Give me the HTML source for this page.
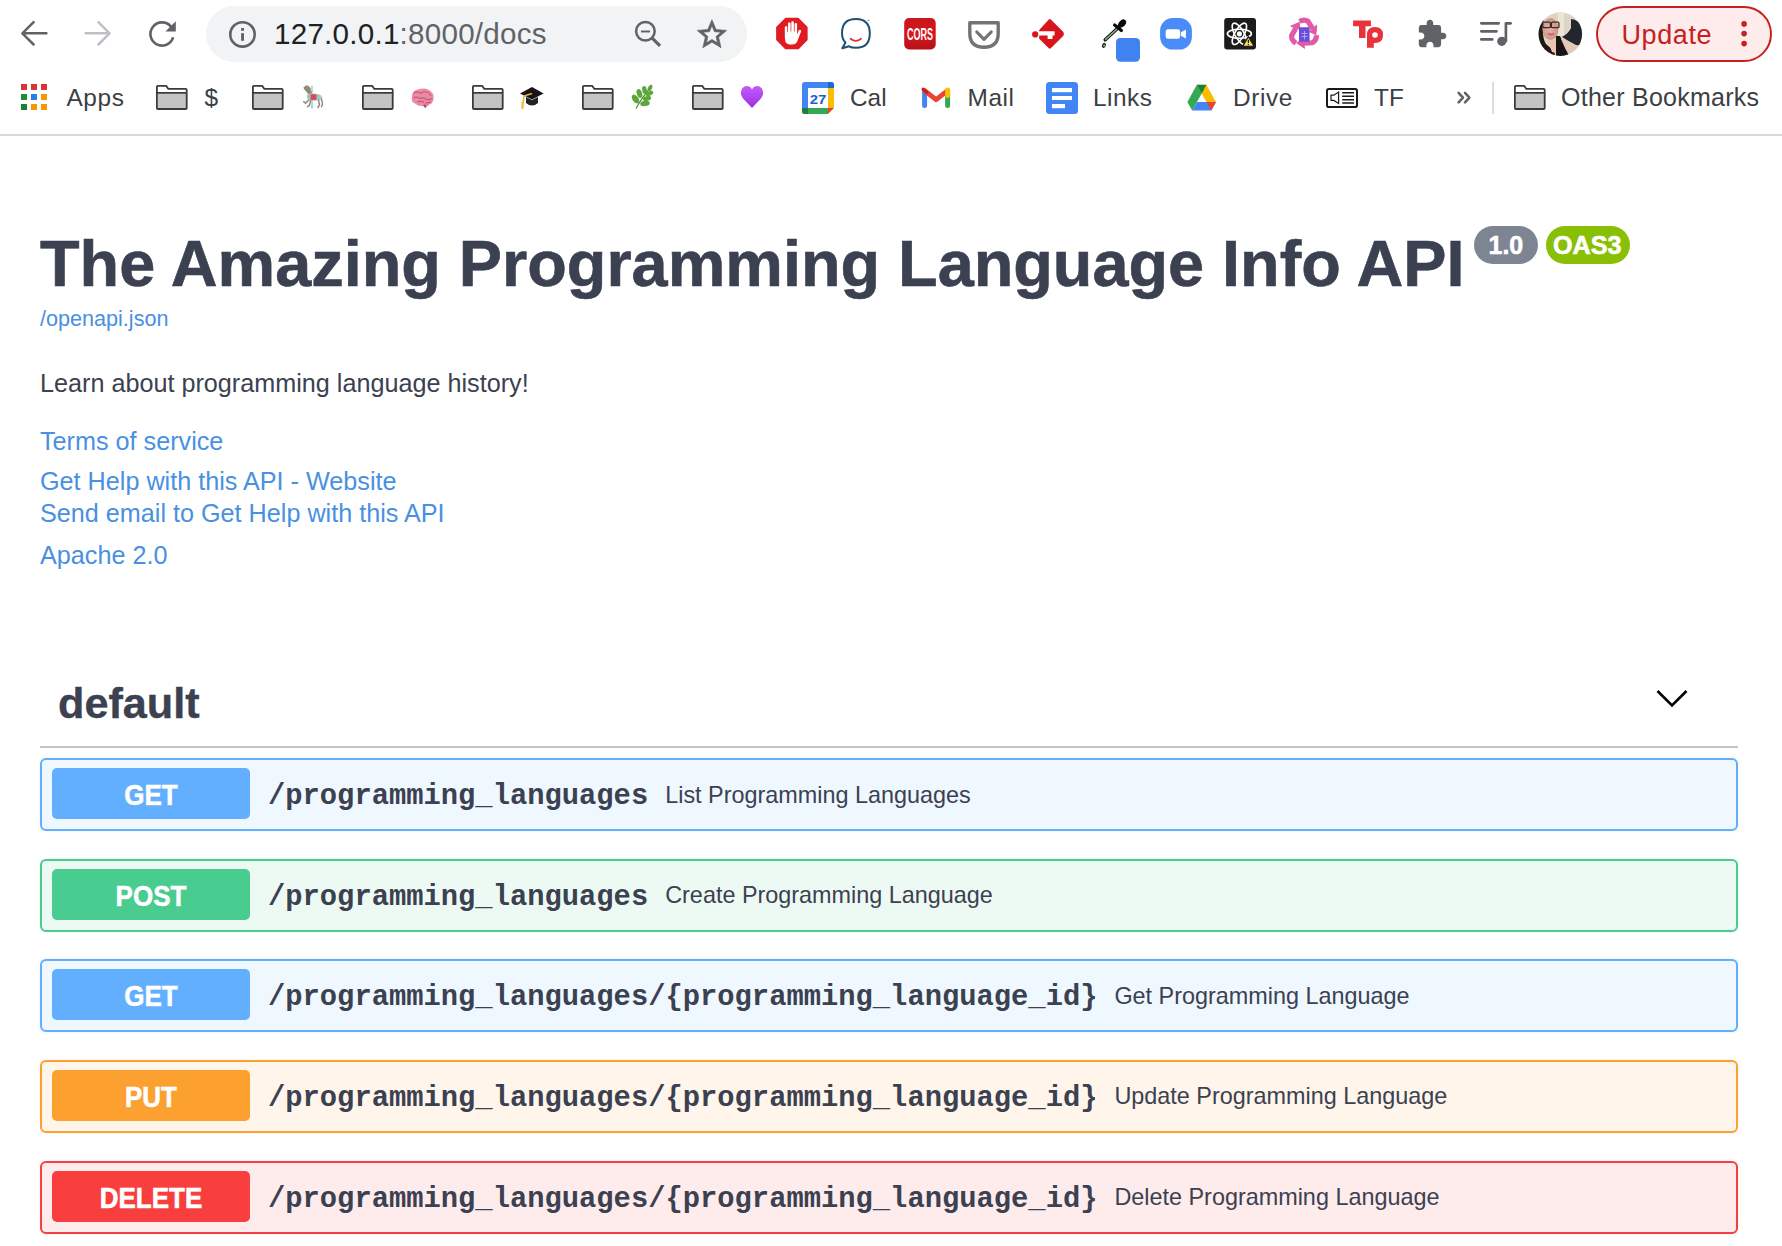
<!DOCTYPE html>
<html><head><meta charset="utf-8">
<style>
html,body{margin:0;padding:0;background:#fff;width:1782px;height:1246px;overflow:hidden;position:relative;font-family:'Liberation Sans', sans-serif;}
.t{position:absolute;white-space:nowrap;line-height:normal;}
.abs{position:absolute;}
svg{position:absolute;overflow:visible;}
</style></head><body>

<div class="abs" style="left:206px;top:6px;width:541px;height:56px;border-radius:28px;background:#f1f3f4;"></div>
<div class="abs" style="left:0;top:134px;width:1782px;height:2px;background:#d9d9d9;"></div>
<div class="abs" style="left:1596px;top:6px;width:172px;height:51.5px;border:2px solid #c5221f;border-radius:28px;background:#fdeceb;"></div>
<svg style="left:0;top:0" width="1782" height="136" viewBox="0 0 1782 136">
<path d="M46.4 33.3 H22.6 M33.6 22.2 L22.4 33.3 L33.6 44.5" fill="none" stroke="#5f6368" stroke-width="2.5" stroke-linecap="round" stroke-linejoin="round"/>
<path d="M85.6 33.3 H109.4 M98.4 22.2 L109.6 33.3 L98.4 44.5" fill="none" stroke="#bdc1c6" stroke-width="2.5" stroke-linecap="round" stroke-linejoin="round"/>
<path d="M170.6 26.2 A11.6 11.6 0 1 0 172.8 38.3" fill="none" stroke="#5f6368" stroke-width="2.6" stroke-linecap="round"/>
<path d="M175.8 21.2 V31.6 H165.4 Z" fill="#5f6368"/>
<circle cx="242.5" cy="34.4" r="12.2" fill="none" stroke="#5f6368" stroke-width="2.6"/>
<rect x="241.1" y="28" width="2.9" height="2.8" fill="#5f6368"/><rect x="241.1" y="33.2" width="2.9" height="7.6" fill="#5f6368"/>
<circle cx="645.4" cy="31.3" r="9.3" fill="none" stroke="#5f6368" stroke-width="2.5"/>
<path d="M641 31.5 H650" stroke="#5f6368" stroke-width="1.9"/>
<path d="M652.2 38.2 L660 45.8" stroke="#5f6368" stroke-width="3.2" stroke-linecap="butt"/>
<path transform="translate(694.3,16.8) scale(1.47)" fill="#5f6368" stroke="#5f6368" stroke-width="0.45" stroke-linejoin="round" d="M22 9.24l-7.19-.62L12 2 9.19 8.63 2 9.24l5.46 4.73L5.82 21 12 17.27 18.18 21l-1.63-7.03L22 9.24zM12 15.4l-3.76 2.27 1-4.28-3.32-2.88 4.38-.38L12 6.1l1.71 4.04 4.38.38-3.32 2.88 1 4.28L12 15.4z"/>
<polygon points="806.9,39.8 798.1,48.6 785.7,48.6 776.9,39.8 776.9,27.4 785.7,18.6 798.1,18.6 806.9,27.4" fill="#e01b22" stroke="#e01b22" stroke-width="1.5" stroke-linejoin="round"/>
<path fill="#fff" d="M785.5 42 Q784.6 38 784.8 33 V27.5 Q784.8 26 786.1 26 Q787.3 26 787.3 27.5 V32 H788 V23.8 Q788 22.3 789.3 22.3 Q790.6 22.3 790.6 23.8 V31.5 H791.3 V22.6 Q791.3 21.2 792.6 21.2 Q793.9 21.2 793.9 22.6 V31.5 H794.6 V24.5 Q794.6 23.1 795.9 23.1 Q797.1 23.1 797.1 24.5 V34.5 L798.5 31 Q799.3 29.4 800.5 30 Q801.5 30.6 800.9 32 L797.6 40.5 Q796.5 44.5 792 44.6 Q787 44.6 785.5 42 Z"/>
<path d="M845.5 42.6 Q842 39 842 33 Q842 19 856 19 Q869.8 19 869.8 33.5 Q869.8 47.8 856 47.8 Q851.5 47.8 849 46.3 L842.3 48.2 L845.5 42.6 Z" fill="none" stroke="#1f4f72" stroke-width="2" stroke-linejoin="round"/>
<path d="M850.6 38.8 Q855.8 43 861 38.8" fill="none" stroke="#e0323c" stroke-width="1.8" stroke-linecap="round"/>
<path d="M867.5 20.3 H869.5" stroke="#555" stroke-width="0.8"/>
<defs><linearGradient id="corsg" x1="0" y1="0" x2="0" y2="1"><stop offset="0" stop-color="#c8161d"/><stop offset="0.5" stop-color="#d9141b"/><stop offset="1" stop-color="#b5121a"/></linearGradient></defs>
<rect x="904.2" y="18.1" width="31.5" height="31.3" rx="5" fill="url(#corsg)"/>
<text x="920" y="39.8" text-anchor="middle" font-family="Liberation Sans" font-weight="700" font-size="16.5" fill="#fff" textLength="26" lengthAdjust="spacingAndGlyphs">CORS</text>
<path d="M969.8 22.8 H998.2 V33.5 Q998.2 47.2 984 47.2 Q969.8 47.2 969.8 33.5 Z" fill="none" stroke="#737373" stroke-width="3.4" stroke-linejoin="round"/>
<path d="M976.8 32 L984 39.4 L991.2 32" fill="none" stroke="#737373" stroke-width="3.2" stroke-linecap="round" stroke-linejoin="round"/>
<path fill="#d8141c" d="M1048.8 19.4 Q1049.8 18.6 1050.8 19.4 L1063.4 32 Q1064.4 33.9 1063.4 35.8 L1050.8 48.3 Q1049.8 49.1 1048.8 48.3 L1039.2 38.7 L1039.2 30 Z"/>
<path fill="#fff" d="M1038.5 31.3 H1054.6 V35.6 H1052.5 V39 H1047.6 V35.6 H1038.5 Z"/>
<circle cx="1035.2" cy="34.4" r="3.1" fill="#d8141c"/>
<path d="M1105.2 39.8 L1117.4 28.6" stroke="#111" stroke-width="3.4" stroke-linecap="round"/>
<path d="M1105.6 39.4 L1117 29" stroke="#7fb58a" stroke-width="1.5" stroke-linecap="round"/>
<path d="M1114.6 25 L1121.4 30.6" stroke="#0a0a0a" stroke-width="3.2" stroke-linecap="round"/>
<ellipse cx="1122.2" cy="23.4" rx="4.4" ry="3.2" transform="rotate(-45 1122.2 23.4)" fill="#0a0a0a"/>
<path d="M1118.6 27 L1121 24.4" stroke="#0a0a0a" stroke-width="4"/>
<ellipse cx="1103.9" cy="45.4" rx="1.9" ry="2.6" transform="rotate(25 1103.9 45.4)" fill="#1d2a1d"/>
<ellipse cx="1104.1" cy="45.6" rx="0.8" ry="1.3" fill="#7fb58a"/>
<rect x="1116" y="38" width="24" height="23.8" rx="4.2" fill="#3f82f0"/>
<rect x="1160.1" y="18.1" width="31.8" height="31.5" rx="12.5" fill="#4a8cf7"/>
<rect x="1165.7" y="29.2" width="14.4" height="9.6" rx="2.2" fill="#fff"/>
<path d="M1180.8 32.6 L1185.9 29.4 V38.6 L1180.8 35.6 Z" fill="#fff"/>
<rect x="1224.2" y="17.9" width="31.8" height="31.7" rx="3" fill="#1c1c1c"/>
<g fill="none" stroke="#fff" stroke-width="1.6"><ellipse cx="1239.4" cy="33.8" rx="12" ry="4.6" transform="rotate(-60 1239.4 33.8)"/><ellipse cx="1239.4" cy="33.8" rx="12" ry="4.6" transform="rotate(60 1239.4 33.8)"/><ellipse cx="1239.4" cy="33.8" rx="12" ry="4.6" transform="rotate(0 1239.4 33.8)"/></g>
<circle cx="1239.4" cy="33.8" r="2.6" fill="#fff"/>
<path d="M1248.4 36.6 L1254.2 46.4 H1242.6 Z" fill="#f2e35a" stroke="#1c1c1c" stroke-width="1.2" stroke-linejoin="round"/>
<path d="M1248.4 39.8 V43" stroke="#1c1c1c" stroke-width="1.3"/><circle cx="1248.4" cy="44.6" r="0.7" fill="#1c1c1c"/>
<g transform="translate(1304,33.3)" fill="none" stroke="#e05aa8" stroke-width="5.2" stroke-linejoin="round">
<path transform="rotate(0)" d="M-4.5 -11.8 Q0 -14.5 4 -12 L8.6 -4.6"/>
<path transform="rotate(0)" d="M5.8 -1.6 L12.6 -7.8 L11.8 1.2 Z" fill="#e05aa8" stroke-width="1.2"/>
<path transform="rotate(120)" d="M-4.5 -11.8 Q0 -14.5 4 -12 L8.6 -4.6"/>
<path transform="rotate(120)" d="M5.8 -1.6 L12.6 -7.8 L11.8 1.2 Z" fill="#e05aa8" stroke-width="1.2"/>
<path transform="rotate(240)" d="M-4.5 -11.8 Q0 -14.5 4 -12 L8.6 -4.6"/>
<path transform="rotate(240)" d="M5.8 -1.6 L12.6 -7.8 L11.8 1.2 Z" fill="#e05aa8" stroke-width="1.2"/>
</g>
<rect x="1299" y="27.2" width="10.6" height="14.6" rx="1" fill="#6a4ed8"/>
<path d="M1301.5 33.5 H1307.5 M1301.5 36.5 H1307.5 M1304.5 31 V39.5" stroke="#b9a8f0" stroke-width="0.9"/>
<path fill="#e8323c" d="M1353.1 20.4 H1370.9 V26.2 H1365.5 V37.9 H1359 V26.2 H1353.1 Z"/>
<path fill="#e8323c" d="M1367 35 Q1367 27 1375 27 Q1383 27 1383 35 Q1383 43 1375 43 Q1374.5 43 1373.8 42.8 V47.7 H1367 Z"/>
<circle cx="1375" cy="35" r="2.8" fill="#fff"/>
<path transform="translate(1416.2,18.4) scale(1.31)" fill="#5f6368" d="M20.5 11H19V7c0-1.1-.9-2-2-2h-4V3.5C13 2.12 11.88 1 10.5 1S8 2.12 8 3.5V5H4c-1.1 0-1.99.9-1.99 2v3.8H3.5c1.49 0 2.7 1.21 2.7 2.7s-1.21 2.7-2.7 2.7H2V20c0 1.1.9 2 2 2h3.8v-1.5c0-1.49 1.21-2.7 2.7-2.7 1.49 0 2.7 1.21 2.7 2.7V22H17c1.1 0 2-.9 2-2v-4h1.5c1.38 0 2.5-1.12 2.5-2.5S21.88 11 20.5 11z"/>
<path d="M1481.3 23.3 H1498.7 M1481.3 31.3 H1496.5 M1481.3 39.4 H1492.3" stroke="#5f6368" stroke-width="2.7" stroke-linecap="round"/>
<path d="M1505.9 41 V23.3 H1510.7" fill="none" stroke="#5f6368" stroke-width="2.7" stroke-linecap="round" stroke-linejoin="round"/>
<circle cx="1501.8" cy="41.3" r="4.6" fill="#5f6368"/>
<defs><clipPath id="av"><circle cx="26.3" cy="26.1" r="21.8"/></clipPath><radialGradient id="face" cx="0.45" cy="0.5" r="0.6"><stop offset="0" stop-color="#e8b4a8"/><stop offset="1" stop-color="#c98f80"/></radialGradient></defs>
<g transform="translate(1534,8)"><g clip-path="url(#av)"><rect x="0" y="0" width="52" height="52" fill="#ddd6c4"/><path d="M24 0 H30 V28 H24 Z" fill="#ece5d3"/><path d="M37 11 Q45 11 49 22 V38 L42 37 Q34 33 28 29 Q35 25 37 20 Z" fill="#23262e"/><path d="M0 0 H21 Q11 5 9 15 Q8 30 12 36 Q16 40 20 42 L22 52 H0 Z" fill="#221717"/><ellipse cx="16.5" cy="21" rx="8" ry="11" fill="url(#face)"/><path d="M13 31 Q19 34 24 30 L30 42 Q24 46 18 44 Z" fill="#eac3b1"/><path d="M22 28 L26 28 L35 48 L31 52 H22 Z" fill="#181414"/><path d="M27 31 Q36 33 45 40 L44 46 Q36 47 32 42 Z" fill="#e3c9b6"/><g fill="none" stroke="#3a2a2a" stroke-width="1.3"><rect x="8.8" y="14.2" width="7.6" height="5.4" rx="1.2"/><rect x="17.4" y="14.2" width="7.6" height="5.4" rx="1.2"/></g><path d="M14 25.6 Q17 27.6 20 25.6" stroke="#c0606a" stroke-width="1.8" fill="none"/></g></g>
<g fill="#c5221f"><circle cx="1744.1" cy="23.9" r="2.8"/><circle cx="1744.1" cy="33.6" r="2.8"/><circle cx="1744.1" cy="43.6" r="2.8"/></g>
<rect x="21" y="84" width="6" height="6" fill="#db3236"/>
<rect x="31" y="84" width="6" height="6" fill="#db3236"/>
<rect x="41" y="84" width="6" height="6" fill="#db3236"/>
<rect x="21" y="94" width="6" height="6" fill="#1e8e3e"/>
<rect x="31" y="94" width="6" height="6" fill="#2b7de9"/>
<rect x="41" y="94" width="6" height="6" fill="#f29900"/>
<rect x="21" y="104" width="6" height="6" fill="#188038"/>
<rect x="31" y="104" width="6" height="6" fill="#f29900"/>
<rect x="41" y="104" width="6" height="6" fill="#f29900"/>
<g transform="translate(156,85)">
<path d="M1.6 8.6 H30.3 V22.6 Q30.3 24 28.9 24 H3 Q1.6 24 1.6 22.6 Z" fill="#c4c4c4"/>
<path d="M0.9 23 V2.1 Q0.9 0.9 2.1 0.9 H10.3 L12.4 3.9 H29.6 Q30.7 3.9 30.7 5 V23 Q30.7 24 29.6 24 H2 Q0.9 24 0.9 23 Z M1 7.9 H30.6" fill="none" stroke="#3a3a3a" stroke-width="1.8" stroke-linejoin="round"/>
</g>
<g transform="translate(252,85)">
<path d="M1.6 8.6 H30.3 V22.6 Q30.3 24 28.9 24 H3 Q1.6 24 1.6 22.6 Z" fill="#c4c4c4"/>
<path d="M0.9 23 V2.1 Q0.9 0.9 2.1 0.9 H10.3 L12.4 3.9 H29.6 Q30.7 3.9 30.7 5 V23 Q30.7 24 29.6 24 H2 Q0.9 24 0.9 23 Z M1 7.9 H30.6" fill="none" stroke="#3a3a3a" stroke-width="1.8" stroke-linejoin="round"/>
</g>
<g transform="translate(362,85)">
<path d="M1.6 8.6 H30.3 V22.6 Q30.3 24 28.9 24 H3 Q1.6 24 1.6 22.6 Z" fill="#c4c4c4"/>
<path d="M0.9 23 V2.1 Q0.9 0.9 2.1 0.9 H10.3 L12.4 3.9 H29.6 Q30.7 3.9 30.7 5 V23 Q30.7 24 29.6 24 H2 Q0.9 24 0.9 23 Z M1 7.9 H30.6" fill="none" stroke="#3a3a3a" stroke-width="1.8" stroke-linejoin="round"/>
</g>
<g transform="translate(472,85)">
<path d="M1.6 8.6 H30.3 V22.6 Q30.3 24 28.9 24 H3 Q1.6 24 1.6 22.6 Z" fill="#c4c4c4"/>
<path d="M0.9 23 V2.1 Q0.9 0.9 2.1 0.9 H10.3 L12.4 3.9 H29.6 Q30.7 3.9 30.7 5 V23 Q30.7 24 29.6 24 H2 Q0.9 24 0.9 23 Z M1 7.9 H30.6" fill="none" stroke="#3a3a3a" stroke-width="1.8" stroke-linejoin="round"/>
</g>
<g transform="translate(582,85)">
<path d="M1.6 8.6 H30.3 V22.6 Q30.3 24 28.9 24 H3 Q1.6 24 1.6 22.6 Z" fill="#c4c4c4"/>
<path d="M0.9 23 V2.1 Q0.9 0.9 2.1 0.9 H10.3 L12.4 3.9 H29.6 Q30.7 3.9 30.7 5 V23 Q30.7 24 29.6 24 H2 Q0.9 24 0.9 23 Z M1 7.9 H30.6" fill="none" stroke="#3a3a3a" stroke-width="1.8" stroke-linejoin="round"/>
</g>
<g transform="translate(692,85)">
<path d="M1.6 8.6 H30.3 V22.6 Q30.3 24 28.9 24 H3 Q1.6 24 1.6 22.6 Z" fill="#c4c4c4"/>
<path d="M0.9 23 V2.1 Q0.9 0.9 2.1 0.9 H10.3 L12.4 3.9 H29.6 Q30.7 3.9 30.7 5 V23 Q30.7 24 29.6 24 H2 Q0.9 24 0.9 23 Z M1 7.9 H30.6" fill="none" stroke="#3a3a3a" stroke-width="1.8" stroke-linejoin="round"/>
</g>
<g transform="translate(1514,85)">
<path d="M1.6 8.6 H30.3 V22.6 Q30.3 24 28.9 24 H3 Q1.6 24 1.6 22.6 Z" fill="#c4c4c4"/>
<path d="M0.9 23 V2.1 Q0.9 0.9 2.1 0.9 H10.3 L12.4 3.9 H29.6 Q30.7 3.9 30.7 5 V23 Q30.7 24 29.6 24 H2 Q0.9 24 0.9 23 Z M1 7.9 H30.6" fill="none" stroke="#3a3a3a" stroke-width="1.8" stroke-linejoin="round"/>
</g>
<g transform="translate(302.5,85.7)"><path d="M9.5 0 V23" stroke="#6fc2b8" stroke-width="1.1"/><path d="M1 1.5 Q4 -0.5 7 2 L9.5 7 Q8 9 5.5 8 L3 5 Q1 4 1 1.5 Z" fill="#8c8a84"/><path d="M3 0.5 Q6 0 8 4" stroke="#b08a58" stroke-width="1.6" fill="none"/><path d="M4.5 8.5 Q10 7 16 8.5 Q19.5 9 20 12 L19.5 14 Q14 15.5 8 15 Q4.5 14 4.5 8.5 Z" fill="#c9c4bb"/><rect x="8" y="8.6" width="6" height="5.6" fill="#d9475a"/><rect x="5" y="9.5" width="2.6" height="4.2" fill="#78d3c4"/><rect x="14.5" y="9.5" width="2.6" height="4.2" fill="#78d3c4"/><path d="M6 14.5 L3 17.5 L1.2 16 M8 15 L7 19.5 L5 21 M16 14.5 L17 19 L15.5 22 M19 13.5 L20 18.5 L19 21" fill="none" stroke="#8e8b86" stroke-width="1.5" stroke-linecap="round"/></g>
<g transform="translate(410,88)"><path d="M2 9 Q1 3 8 1.5 Q14 -0.5 19 2 Q24.5 5 23.5 11 Q23 16 18 17 Q16 19.5 13 18 Q8 18.5 5 15.5 Q0.5 14 2 9 Z" fill="#ec8aa4"/><path d="M4 5 Q8 3 11 5.5 Q13 3 17 4 Q20 5 21 8 M3.5 10 Q7 8 10 10.5 Q13 9 16 11 Q19 12.5 22 10.5 M7 14 Q11 12.5 14 14.5 M15.5 15.5 Q18 14 21 14.5" fill="none" stroke="#c75778" stroke-width="1.1"/><path d="M13.5 16.5 Q16 19.5 19 17" fill="#d86a8c"/><path d="M14 17 L15.8 19.5" stroke="#a8405e" stroke-width="1.8"/></g>
<g transform="translate(520,86)"><path d="M0 7.5 L12 1 L23.6 7.5 L12 13.5 Z" fill="#151515"/><path d="M6 11 V17 Q12 22 18 17 V11 L12 14 Z" fill="#232323"/><path d="M12 7.5 L4 10 L2.5 21" fill="none" stroke="#e6b43c" stroke-width="1.6"/><path d="M2.5 16 V23" stroke="#f0c040" stroke-width="2.2"/></g>
<g transform="translate(631,85)"><path d="M5 23.5 Q10 14 20 2" fill="none" stroke="#5b8f3a" stroke-width="1.2"/><g fill="#5aa83c"><ellipse cx="4.5" cy="14" rx="3" ry="5" transform="rotate(-35 4.5 14)"/><ellipse cx="8.5" cy="8.5" rx="2.6" ry="4.6" transform="rotate(-20 8.5 8.5)"/><ellipse cx="13.5" cy="5" rx="2.3" ry="4" transform="rotate(-10 13.5 5)"/><ellipse cx="19" cy="3" rx="2" ry="3.5" transform="rotate(25 19 3)"/><ellipse cx="18.5" cy="8.5" rx="4" ry="2.2" transform="rotate(-25 18.5 8.5)"/><ellipse cx="16" cy="13.5" rx="4.2" ry="2.4" transform="rotate(-15 16 13.5)"/><ellipse cx="14" cy="18.5" rx="4.8" ry="2.6" transform="rotate(-5 14 18.5)"/></g></g>
<defs><linearGradient id="hg" x1="0" y1="0" x2="0" y2="1"><stop offset="0" stop-color="#c45cf7"/><stop offset="1" stop-color="#9b2fe8"/></linearGradient></defs>
<path d="M752 108 L743.5 99 Q740 95 741.3 90.5 Q742.7 86 747 86 Q750.5 86 752 89.5 Q753.5 86 757 86 Q761.3 86 762.7 90.5 Q764 95 760.5 99 Z" fill="url(#hg)"/>
<g transform="translate(802,82)"><path d="M0 6 V2.5 Q0 0 2.5 0 H26 V6 Z" fill="#4285f4"/><rect x="0" y="6" width="6" height="20" fill="#4285f4"/><path d="M26 0 H29.5 Q32 0 32 2.5 V6 H26 Z" fill="#1967d2"/><rect x="26" y="6" width="6" height="20" fill="#fbbc04"/><rect x="6" y="26" width="20" height="6" fill="#34a853"/><path d="M0 26 H6 V32 H2.5 Q0 32 0 29.5 Z" fill="#188038"/><path d="M26 26 H32 L26 32 Z" fill="#ea4335"/><rect x="6" y="6" width="20" height="20" fill="#fff"/><text x="16" y="21.9" text-anchor="middle" font-family="Liberation Sans" font-weight="700" font-size="13.5" fill="#1a5fd0" textLength="16.6" lengthAdjust="spacingAndGlyphs">27</text></g>
<g transform="translate(922,87)"><path d="M2.6 18.4 V4.2" stroke="#4285f4" stroke-width="5" stroke-linecap="round"/><path d="M25.6 18.4 V4.2" stroke="#34a853" stroke-width="5" stroke-linecap="round"/><path d="M2.6 3.6 L14.1 12.6 L25.6 3.6" fill="none" stroke="#ea4335" stroke-width="5" stroke-linecap="round" stroke-linejoin="round"/><path d="M25.6 3 V8.5" stroke="#fbbc04" stroke-width="5" stroke-linecap="round"/><path d="M1.2 2.2 L4.8 5.2" stroke="#c5221f" stroke-width="3.4" stroke-linecap="round"/></g>
<rect x="1046" y="82" width="32" height="32" rx="3.5" fill="#4285f4"/>
<g fill="#fff"><rect x="1052" y="88" width="20" height="4.2"/><rect x="1052" y="96" width="20" height="4"/><rect x="1052" y="104" width="13" height="4.2"/></g>
<g transform="translate(1187.4,84.8)"><path d="M9.5 0 H19 L28.6 17.2 H19 Z" fill="#fbbc04"/><path d="M9.5 0 L0 17.2 L4.8 25.8 L14.3 8.6 Z" fill="#34a853"/><path d="M9.5 0 H19 L14.3 8.6 Z" fill="#188038"/><path d="M4.8 25.8 H23.8 L28.6 17.2 H9.6 Z" fill="#4285f4"/><path d="M23.8 25.8 L28.6 17.2 H19 Z" fill="#ea4335"/></g>
<rect x="1327" y="88.9" width="30" height="18.2" rx="1.8" fill="none" stroke="#1a1a1a" stroke-width="2"/>
<path d="M1331 95.2 H1333.8 L1338.6 92 V103.4 L1333.8 100.4 H1331 Z" fill="none" stroke="#1a1a1a" stroke-width="1.2"/>
<path d="M1342.2 92.8 H1354 M1342.2 96.3 H1354 M1342.2 99.7 H1354 M1342.2 103 H1354" stroke="#1a1a1a" stroke-width="1.4"/>
<path d="M1458.6 92.8 L1463 97.6 L1458.6 102.4 M1465 92.8 L1469.4 97.6 L1465 102.4" fill="none" stroke="#5f6368" stroke-width="2.5" stroke-linecap="round" stroke-linejoin="round"/>
<rect x="1492" y="82" width="2" height="32" fill="#dadce0"/>
</svg>
<div class="t" style="left:274px;top:17px;font-size:29.6px;color:#202124;font-weight:400;font-family:'Liberation Sans', sans-serif;letter-spacing:0.24px;">127.0.0.1<span style="color:#5f6368">:8000/docs</span></div>
<div class="t" style="left:66.5px;top:84px;font-size:24.4px;color:#3c4043;font-weight:400;font-family:'Liberation Sans', sans-serif;letter-spacing:0.6px;">Apps</div>
<div class="t" style="left:204.5px;top:84px;font-size:24.4px;color:#3c4043;font-weight:400;font-family:'Liberation Sans', sans-serif;">$</div>
<div class="t" style="left:850px;top:84px;font-size:24.4px;color:#3c4043;font-weight:400;font-family:'Liberation Sans', sans-serif;">Cal</div>
<div class="t" style="left:967.5px;top:84px;font-size:24.4px;color:#3c4043;font-weight:400;font-family:'Liberation Sans', sans-serif;letter-spacing:0.6px;">Mail</div>
<div class="t" style="left:1093px;top:84px;font-size:24.4px;color:#3c4043;font-weight:400;font-family:'Liberation Sans', sans-serif;letter-spacing:0.5px;">Links</div>
<div class="t" style="left:1233px;top:84px;font-size:24.4px;color:#3c4043;font-weight:400;font-family:'Liberation Sans', sans-serif;letter-spacing:0.6px;">Drive</div>
<div class="t" style="left:1374px;top:84px;font-size:24.4px;color:#3c4043;font-weight:400;font-family:'Liberation Sans', sans-serif;">TF</div>
<div class="t" style="left:1561px;top:83px;font-size:25px;color:#3c4043;font-weight:400;font-family:'Liberation Sans', sans-serif;letter-spacing:0.25px;">Other Bookmarks</div>
<div class="t" style="left:1621.5px;top:19.5px;font-size:27px;color:#c5221f;font-weight:400;font-family:'Liberation Sans', sans-serif;letter-spacing:0.6px;">Update</div>
<div class="t" style="left:40px;top:226px;font-size:64.8px;color:#3b4151;font-weight:700;font-family:'Liberation Sans', sans-serif;-webkit-text-stroke:0.6px #3b4151;">The Amazing Programming Language Info API</div>
<div class="abs" style="left:1474px;top:226px;width:64px;height:38px;border-radius:19px;background:#7d8492;"></div>
<div class="t" style="left:1488.5px;top:231px;font-size:25px;color:#fff;font-weight:700;font-family:'Liberation Sans', sans-serif;-webkit-text-stroke:0.6px #fff;">1.0</div>
<div class="abs" style="left:1546px;top:226px;width:84px;height:38px;border-radius:19px;background:#89bf04;"></div>
<div class="t" style="left:1553px;top:231px;font-size:25.2px;color:#fff;font-weight:700;font-family:'Liberation Sans', sans-serif;-webkit-text-stroke:0.6px #fff;">OAS3</div>
<div class="t" style="left:40px;top:306px;font-size:21.6px;color:#4990e2;font-weight:400;font-family:'Liberation Sans', sans-serif;">/openapi.json</div>
<div class="t" style="left:40px;top:369px;font-size:25.2px;color:#3b4151;font-weight:400;font-family:'Liberation Sans', sans-serif;">Learn about programming language history!</div>
<div class="t" style="left:40px;top:427px;font-size:25.2px;color:#4990e2;font-weight:400;font-family:'Liberation Sans', sans-serif;">Terms of service</div>
<div class="t" style="left:40px;top:467px;font-size:25.2px;color:#4990e2;font-weight:400;font-family:'Liberation Sans', sans-serif;">Get Help with this API - Website</div>
<div class="t" style="left:40px;top:499px;font-size:25.2px;color:#4990e2;font-weight:400;font-family:'Liberation Sans', sans-serif;">Send email to Get Help with this API</div>
<div class="t" style="left:40px;top:541px;font-size:25.2px;color:#4990e2;font-weight:400;font-family:'Liberation Sans', sans-serif;">Apache 2.0</div>
<div class="t" style="left:58px;top:679px;font-size:43.2px;color:#3b4151;font-weight:700;font-family:'Liberation Sans', sans-serif;-webkit-text-stroke:0.4px #3b4151;">default</div>
<svg style="left:0;top:0" width="1782" height="1246"><path d="M1657.5 691 L1672 705.5 L1686.5 691" fill="none" stroke="#000" stroke-width="2.6"/></svg>
<div class="abs" style="left:40px;top:746px;width:1698px;height:1.6px;background:#c3c4c7;"></div>
<div class="abs" style="left:40px;top:758px;width:1694px;height:69px;border:2px solid #61affe;border-radius:6px;background:#eff7ff;box-shadow:0 0 3px rgba(0,0,0,.08);"></div>
<div class="abs" style="left:52px;top:768px;width:198px;height:51px;border-radius:5px;background:#61affe;"></div>
<div class="t" style="left:52px;width:198px;text-align:center;top:769.5px;line-height:51px;font-size:26px;font-weight:700;color:#fff;text-shadow:0 1px 0 rgba(0,0,0,.1);-webkit-text-stroke:0.5px #fff;transform:scaleY(1.1);">GET</div>
<div class="t" style="left:268px;top:780.2px;font-size:28.8px;color:#3b4151;font-weight:700;font-family:'Liberation Mono', monospace;">/programming_languages</div>
<div class="t" style="left:665.2px;top:781.5px;font-size:23.4px;color:#3b4151;font-weight:400;font-family:'Liberation Sans', sans-serif;">List Programming Languages</div>
<div class="abs" style="left:40px;top:859px;width:1694px;height:69px;border:2px solid #49cc90;border-radius:6px;background:#edfaf4;box-shadow:0 0 3px rgba(0,0,0,.08);"></div>
<div class="abs" style="left:52px;top:869px;width:198px;height:51px;border-radius:5px;background:#49cc90;"></div>
<div class="t" style="left:52px;width:198px;text-align:center;top:870.5px;line-height:51px;font-size:26px;font-weight:700;color:#fff;text-shadow:0 1px 0 rgba(0,0,0,.1);-webkit-text-stroke:0.5px #fff;transform:scaleY(1.1);">POST</div>
<div class="t" style="left:268px;top:880.8px;font-size:28.8px;color:#3b4151;font-weight:700;font-family:'Liberation Mono', monospace;">/programming_languages</div>
<div class="t" style="left:665.2px;top:882.1px;font-size:23.4px;color:#3b4151;font-weight:400;font-family:'Liberation Sans', sans-serif;">Create Programming Language</div>
<div class="abs" style="left:40px;top:959px;width:1694px;height:69px;border:2px solid #61affe;border-radius:6px;background:#eff7ff;box-shadow:0 0 3px rgba(0,0,0,.08);"></div>
<div class="abs" style="left:52px;top:969px;width:198px;height:51px;border-radius:5px;background:#61affe;"></div>
<div class="t" style="left:52px;width:198px;text-align:center;top:970.5px;line-height:51px;font-size:26px;font-weight:700;color:#fff;text-shadow:0 1px 0 rgba(0,0,0,.1);-webkit-text-stroke:0.5px #fff;transform:scaleY(1.1);">GET</div>
<div class="t" style="left:268px;top:981.4px;font-size:28.8px;color:#3b4151;font-weight:700;font-family:'Liberation Mono', monospace;">/programming_languages/{programming_language_id}</div>
<div class="t" style="left:1114.4px;top:982.7px;font-size:23.4px;color:#3b4151;font-weight:400;font-family:'Liberation Sans', sans-serif;">Get Programming Language</div>
<div class="abs" style="left:40px;top:1060px;width:1694px;height:69px;border:2px solid #fca130;border-radius:6px;background:#fff5ea;box-shadow:0 0 3px rgba(0,0,0,.08);"></div>
<div class="abs" style="left:52px;top:1070px;width:198px;height:51px;border-radius:5px;background:#fca130;"></div>
<div class="t" style="left:52px;width:198px;text-align:center;top:1071.5px;line-height:51px;font-size:26px;font-weight:700;color:#fff;text-shadow:0 1px 0 rgba(0,0,0,.1);-webkit-text-stroke:0.5px #fff;transform:scaleY(1.1);">PUT</div>
<div class="t" style="left:268px;top:1082.0px;font-size:28.8px;color:#3b4151;font-weight:700;font-family:'Liberation Mono', monospace;">/programming_languages/{programming_language_id}</div>
<div class="t" style="left:1114.4px;top:1083.3px;font-size:23.4px;color:#3b4151;font-weight:400;font-family:'Liberation Sans', sans-serif;">Update Programming Language</div>
<div class="abs" style="left:40px;top:1161px;width:1694px;height:69px;border:2px solid #f93e3e;border-radius:6px;background:#feebeb;box-shadow:0 0 3px rgba(0,0,0,.08);"></div>
<div class="abs" style="left:52px;top:1171px;width:198px;height:51px;border-radius:5px;background:#f93e3e;"></div>
<div class="t" style="left:52px;width:198px;text-align:center;top:1172.5px;line-height:51px;font-size:26px;font-weight:700;color:#fff;text-shadow:0 1px 0 rgba(0,0,0,.1);-webkit-text-stroke:0.5px #fff;transform:scaleY(1.1);">DELETE</div>
<div class="t" style="left:268px;top:1182.6px;font-size:28.8px;color:#3b4151;font-weight:700;font-family:'Liberation Mono', monospace;">/programming_languages/{programming_language_id}</div>
<div class="t" style="left:1114.4px;top:1183.9px;font-size:23.4px;color:#3b4151;font-weight:400;font-family:'Liberation Sans', sans-serif;">Delete Programming Language</div>
</body></html>
